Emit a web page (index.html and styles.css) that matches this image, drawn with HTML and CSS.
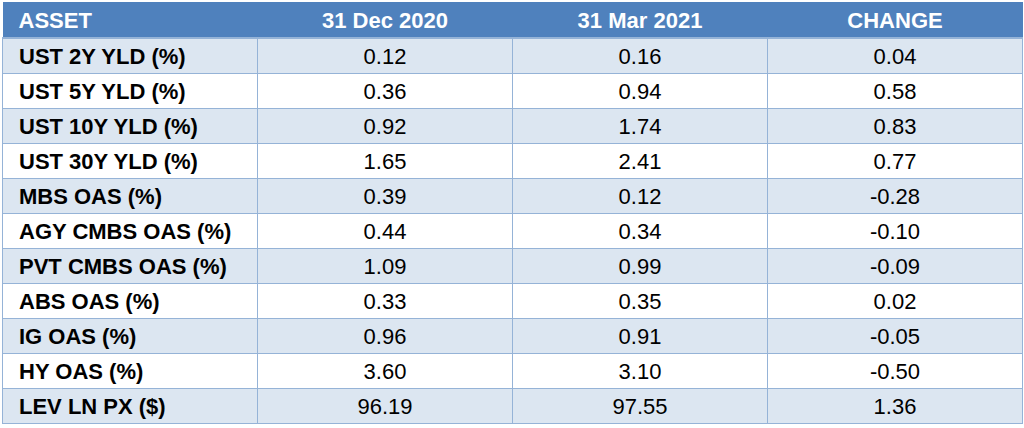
FILE: index.html
```html
<!DOCTYPE html>
<html>
<head>
<meta charset="utf-8">
<link rel="stylesheet" href="styles.css">
</head>
<body>
<table class="rates">
  <thead>
    <tr>
      <th class="label">ASSET</th>
      <th>31 Dec 2020</th>
      <th>31 Mar 2021</th>
      <th>CHANGE</th>
    </tr>
  </thead>
  <tbody>
    <tr><td class="label">UST 2Y YLD (%)</td><td>0.12</td><td>0.16</td><td>0.04</td></tr>
    <tr><td class="label">UST 5Y YLD (%)</td><td>0.36</td><td>0.94</td><td>0.58</td></tr>
    <tr><td class="label">UST 10Y YLD (%)</td><td>0.92</td><td>1.74</td><td>0.83</td></tr>
    <tr><td class="label">UST 30Y YLD (%)</td><td>1.65</td><td>2.41</td><td>0.77</td></tr>
    <tr><td class="label">MBS OAS (%)</td><td>0.39</td><td>0.12</td><td>-0.28</td></tr>
    <tr><td class="label">AGY CMBS OAS (%)</td><td>0.44</td><td>0.34</td><td>-0.10</td></tr>
    <tr><td class="label">PVT CMBS OAS (%)</td><td>1.09</td><td>0.99</td><td>-0.09</td></tr>
    <tr><td class="label">ABS OAS (%)</td><td>0.33</td><td>0.35</td><td>0.02</td></tr>
    <tr><td class="label">IG OAS (%)</td><td>0.96</td><td>0.91</td><td>-0.05</td></tr>
    <tr><td class="label">HY OAS (%)</td><td>3.60</td><td>3.10</td><td>-0.50</td></tr>
    <tr><td class="label">LEV LN PX ($)</td><td>96.19</td><td>97.55</td><td>1.36</td></tr>
  </tbody>
</table>
</body>
</html>
```
FILE: styles.css
```css
html, body {
  margin: 0;
  padding: 0;
  background: #ffffff;
}
body {
  padding: 2px 0 0 2px;
  font-family: "Liberation Sans", Arial, sans-serif;
}
.rates {
  border-collapse: collapse;
  width: 1021px;
  table-layout: fixed;
  font-size: 22px;
  color: #000000;
}
.rates th, .rates td {
  padding: 0 16px;
  text-align: center;
  white-space: nowrap;
  line-height: 24px;
}
.rates th {
  background: #4f81bd;
  color: #ffffff;
  font-weight: bold;
  height: 36px;
  border-bottom: 2px solid #95b3d7;
  padding-top: 2px;
  box-sizing: border-box;
}
.rates td {
  height: 35px;
  border: 1px solid #95b3d7;
  padding-top: 2px;
  box-sizing: border-box;
}
.rates tbody tr:nth-child(odd) td {
  background: #dce6f1;
}
.rates tbody tr:nth-child(even) td {
  background: #ffffff;
}
.rates .label {
  text-align: left;
  font-weight: bold;
}
```
